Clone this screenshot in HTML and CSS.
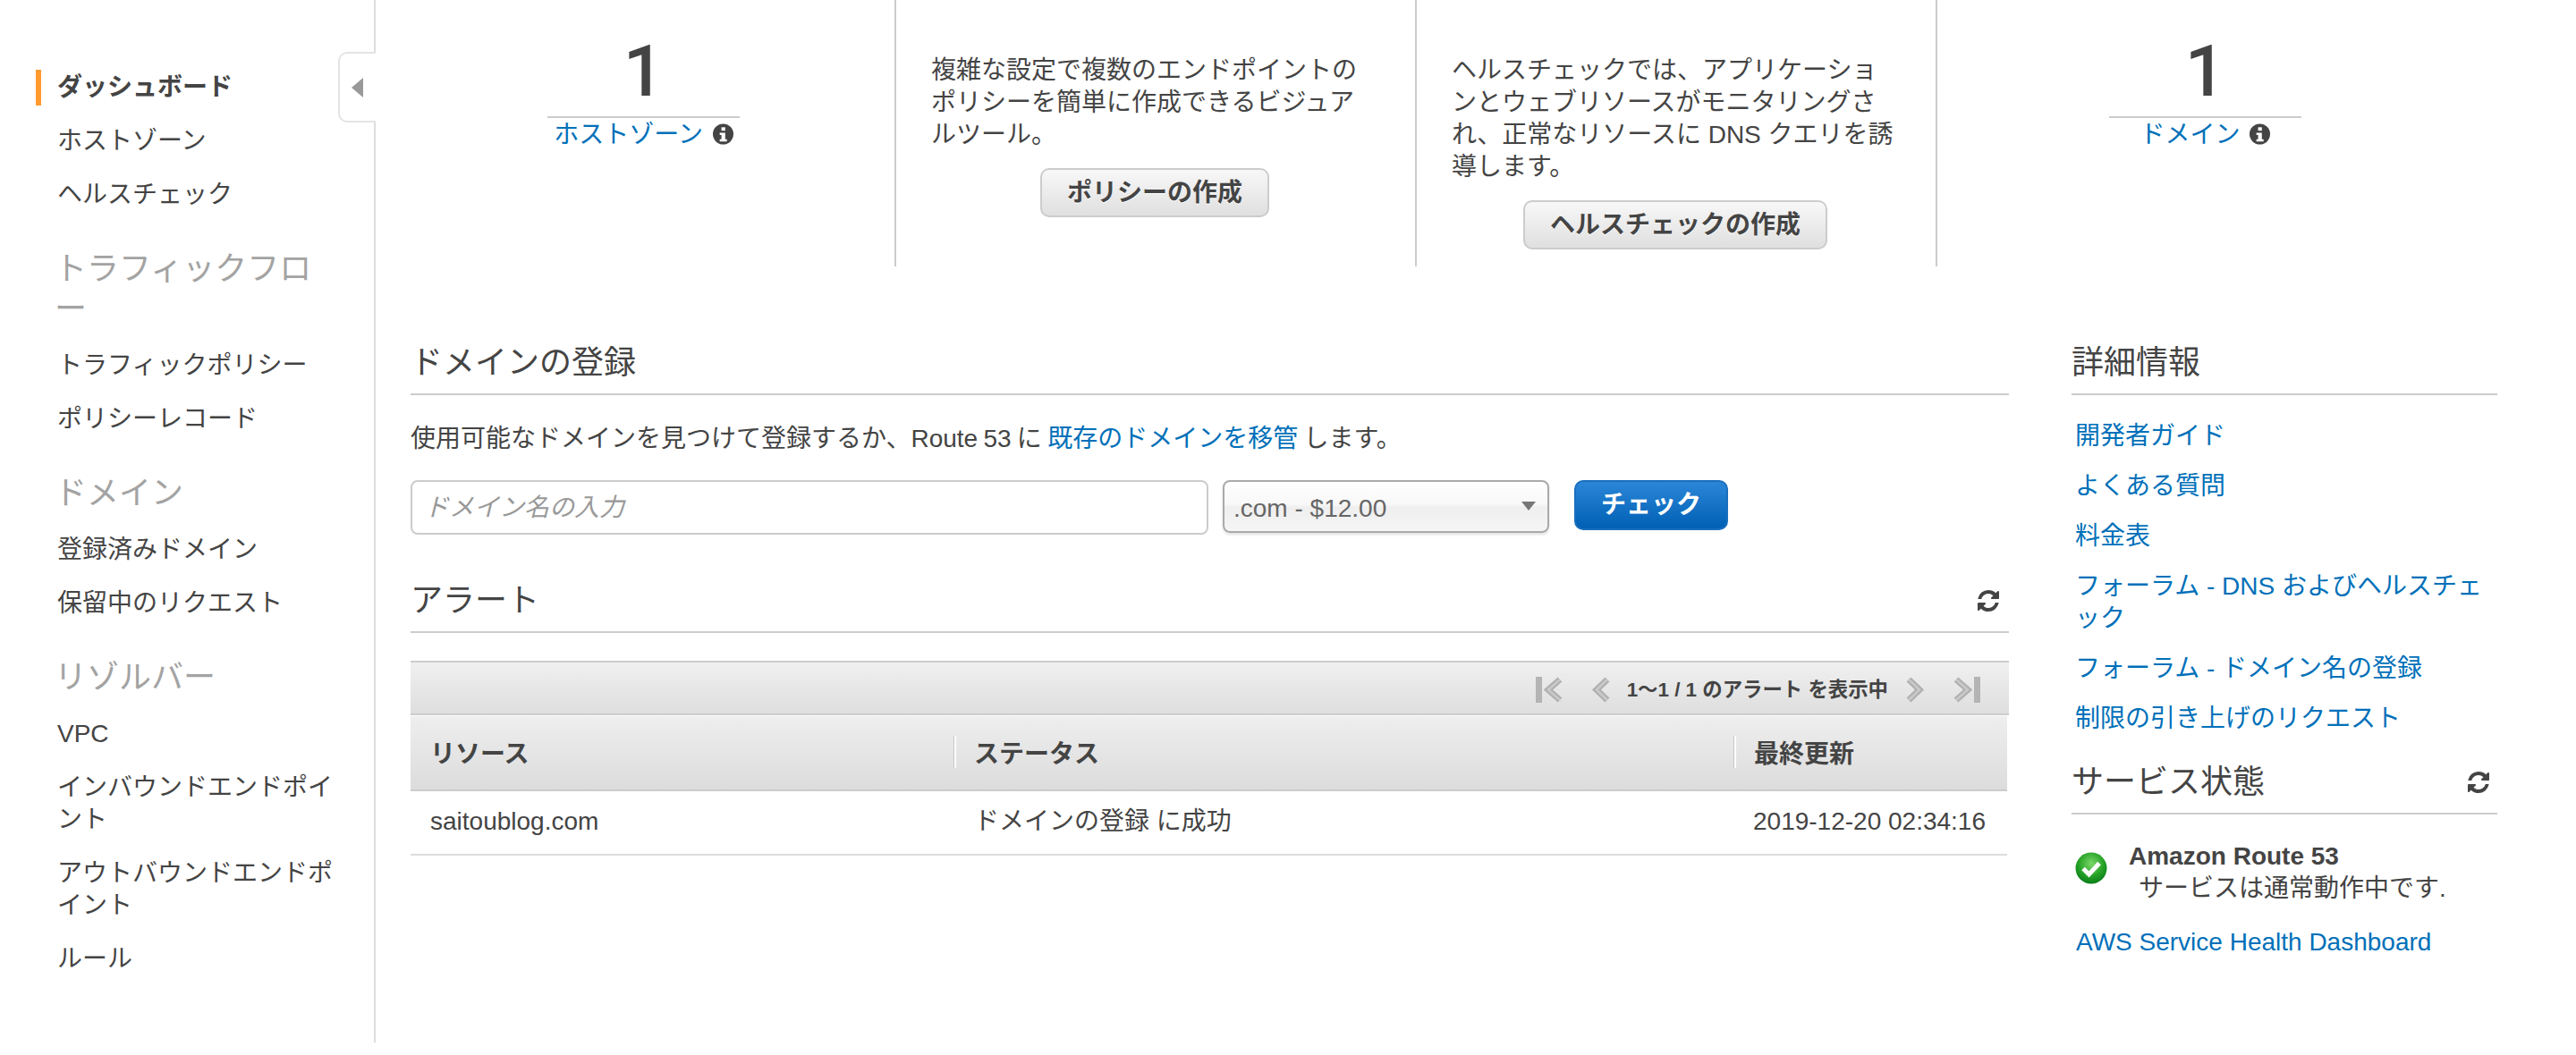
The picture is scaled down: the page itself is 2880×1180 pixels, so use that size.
FILE: index.html
```html
<!DOCTYPE html>
<html lang="ja">
<head>
<meta charset="utf-8">
<title>Route 53 ダッシュボード</title>
<link rel="stylesheet" href="styles.css">
</head>
<body>
<div class="page">
  <aside class="sidebar">
    <button class="collapse" type="button" aria-label="collapse"><span class="collapse-arrow"></span></button>
    <ul class="nav-list">
      <li class="nav-item"><a class="nav-link active" href="#">ダッシュボード</a></li>
      <li class="nav-item"><a class="nav-link" href="#">ホストゾーン</a></li>
      <li class="nav-item"><a class="nav-link" href="#">ヘルスチェック</a></li>
    </ul>
    <h3 class="nav-heading">トラフィックフロー</h3>
    <ul class="nav-list">
      <li class="nav-item"><a class="nav-link" href="#">トラフィックポリシー</a></li>
      <li class="nav-item"><a class="nav-link" href="#">ポリシーレコード</a></li>
    </ul>
    <h3 class="nav-heading">ドメイン</h3>
    <ul class="nav-list">
      <li class="nav-item"><a class="nav-link" href="#">登録済みドメイン</a></li>
      <li class="nav-item"><a class="nav-link" href="#">保留中のリクエスト</a></li>
    </ul>
    <h3 class="nav-heading">リゾルバー</h3>
    <ul class="nav-list">
      <li class="nav-item"><a class="nav-link" href="#">VPC</a></li>
      <li class="nav-item"><a class="nav-link" href="#">インバウンドエンドポイント</a></li>
      <li class="nav-item"><a class="nav-link" href="#">アウトバウンドエンドポイント</a></li>
      <li class="nav-item"><a class="nav-link" href="#">ルール</a></li>
    </ul>
  </aside>

  <main class="main">
    <section class="summary">
      <div class="cell cell-stat">
        <div class="stat">
          <div class="stat-number">1</div>
          <div class="stat-label"><a class="link" href="#">ホストゾーン</a>
            <svg class="info" viewBox="0 0 24 24"><circle cx="12" cy="12" r="12" fill="#444"/><rect x="10" y="4" width="4.4" height="4" fill="#fff"/><path d="M8 10.5h6.4v7.5h2v2.5H8V18h2v-5H8z" fill="#fff"/></svg>
          </div>
        </div>
      </div>
      <div class="cell cell-text">
        <p class="cell-copy">複雑な設定で複数のエンドポイントのポリシーを簡単に作成できるビジュアルツール。</p>
        <button class="btn" type="button">ポリシーの作成</button>
      </div>
      <div class="cell cell-text">
        <p class="cell-copy">ヘルスチェックでは、アプリケーションとウェブリソースがモニタリングされ、正常なリソースに DNS クエリを誘導します。</p>
        <button class="btn" type="button">ヘルスチェックの作成</button>
      </div>
      <div class="cell cell-stat cell-last">
        <div class="stat">
          <div class="stat-number">1</div>
          <div class="stat-label"><a class="link" href="#">ドメイン</a>
            <svg class="info" viewBox="0 0 24 24"><circle cx="12" cy="12" r="12" fill="#444"/><rect x="10" y="4" width="4.4" height="4" fill="#fff"/><path d="M8 10.5h6.4v7.5h2v2.5H8V18h2v-5H8z" fill="#fff"/></svg>
          </div>
        </div>
      </div>
    </section>

    <div class="content">
      <div class="col-left">
        <h2 class="section-title">ドメインの登録</h2>
        <p class="intro">使用可能なドメインを見つけて登録するか、Route 53 に <a class="link" href="#">既存のドメインを移管</a> します。</p>
        <form class="domain-form">
          <input class="domain-input" type="text" placeholder="ドメイン名の入力">
          <div class="select-wrap">
            <select class="tld-select"><option>.com - $12.00</option></select>
          </div>
          <button class="btn btn-primary" type="button">チェック</button>
        </form>

        <h2 class="section-title section-alert">アラート
          <svg class="refresh refresh-alert" viewBox="128 128 1536 1536"><path fill="#444" d="M1639 1056q0 5-1 7-64 268-268 434.5t-478 166.5q-146 0-282.5-55t-243.5-157l-129 129q-19 19-45 19t-45-19-19-45v-448q0-26 19-45t45-19h448q26 0 45 19t19 45-19 45l-137 137q71 66 161 102t187 36q134 0 250-65t186-179q11-17 53-117 8-23 30-23h192q13 0 22.5 9.5t9.5 22.5zm25-800v448q0 26-19 45t-45 19h-448q-26 0-45-19t-19-45 19-45l138-138q-148-137-349-137-134 0-250 65t-186 179q-11 17-53 117-8 23-30 23h-199q-13 0-22.5-9.5t-9.5-22.5v-7q65-268 270-434.5t480-166.5q146 0 284 55.5t245 156.5l130-129q19-19 45-19t45 19 19 45z"/></svg>
        </h2>

        <div class="pager">
          <svg class="pg-icon pg-wide" viewBox="0 0 31 29"><rect x="0" y="0" width="7" height="29" fill="#b4b4b4"/><path d="M27 3 14 14.5 27 26" fill="none" stroke="#b0b0b0" stroke-width="7"/><path d="M27 3 14 14.5 27 26" fill="none" stroke="#c9c9c9" stroke-width="2.5"/></svg>
          <svg class="pg-icon pg-narrow" viewBox="0 0 21 29"><path d="M18 3 6 14.5 18 26" fill="none" stroke="#b0b0b0" stroke-width="7"/><path d="M18 3 6 14.5 18 26" fill="none" stroke="#c9c9c9" stroke-width="2.5"/></svg>
          <span class="pager-text">1〜1 / 1 のアラート を表示中</span>
          <svg class="pg-icon pg-narrow" viewBox="0 0 21 29"><path d="M3 3 15 14.5 3 26" fill="none" stroke="#b0b0b0" stroke-width="7"/><path d="M3 3 15 14.5 3 26" fill="none" stroke="#c9c9c9" stroke-width="2.5"/></svg>
          <svg class="pg-icon pg-wide pg-last" viewBox="0 0 31 29"><path d="M4 3 17 14.5 4 26" fill="none" stroke="#b0b0b0" stroke-width="7"/><path d="M4 3 17 14.5 4 26" fill="none" stroke="#c9c9c9" stroke-width="2.5"/><rect x="24" y="0" width="7" height="29" fill="#b4b4b4"/></svg>
        </div>

        <table class="alerts">
          <thead>
            <tr><th class="col-a">リソース</th><th class="col-b">ステータス</th><th class="col-c">最終更新</th></tr>
          </thead>
          <tbody>
            <tr><td>saitoublog.com</td><td>ドメインの登録 に成功</td><td class="cell-date">2019-12-20 02:34:16</td></tr>
          </tbody>
        </table>
      </div>

      <div class="col-right">
        <h2 class="section-title">詳細情報</h2>
        <ul class="side-links">
          <li><a class="link" href="#">開発者ガイド</a></li>
          <li><a class="link" href="#">よくある質問</a></li>
          <li><a class="link" href="#">料金表</a></li>
          <li><a class="link" href="#">フォーラム - DNS およびヘルスチェック</a></li>
          <li><a class="link" href="#">フォーラム - ドメイン名の登録</a></li>
          <li><a class="link" href="#">制限の引き上げのリクエスト</a></li>
        </ul>
        <h2 class="section-title section-status">サービス状態
          <svg class="refresh refresh-status" viewBox="128 128 1536 1536"><path fill="#444" d="M1639 1056q0 5-1 7-64 268-268 434.5t-478 166.5q-146 0-282.5-55t-243.5-157l-129 129q-19 19-45 19t-45-19-19-45v-448q0-26 19-45t45-19h448q26 0 45 19t19 45-19 45l-137 137q71 66 161 102t187 36q134 0 250-65t186-179q11-17 53-117 8-23 30-23h192q13 0 22.5 9.5t9.5 22.5zm25-800v448q0 26-19 45t-45 19h-448q-26 0-45-19t-19-45 19-45l138-138q-148-137-349-137-134 0-250 65t-186 179q-11 17-53 117-8 23-30 23h-199q-13 0-22.5-9.5t-9.5-22.5v-7q65-268 270-434.5t480-166.5q146 0 284 55.5t245 156.5l130-129q19-19 45-19t45 19 19 45z"/></svg>
        </h2>
        <div class="status">
          <svg class="status-icon" viewBox="0 0 36 36">
            <defs><radialGradient id="ok" cx="50%" cy="35%" r="65%"><stop offset="0" stop-color="#7bd86a"/><stop offset="0.6" stop-color="#27a327"/><stop offset="1" stop-color="#0b7d1a"/></radialGradient></defs>
            <circle cx="18" cy="18" r="17.5" fill="url(#ok)"/>
            <path d="M9 18.5 15.5 25 27 12.5" fill="none" stroke="#fff" stroke-width="5"/>
          </svg>
          <div class="status-text">
            <div class="status-name">Amazon Route 53</div>
            <div class="status-msg">サービスは通常動作中です.</div>
          </div>
        </div>
        <a class="link dashboard-link" href="#">AWS Service Health Dashboard</a>
      </div>
    </div>
  </main>
</div>
</body>
</html>
```

FILE: styles.css
```css
* { box-sizing: border-box; }
html, body { margin: 0; padding: 0; background: #fff; }
body {
  font-family: "Liberation Sans", "Noto Sans CJK JP", sans-serif;
  font-size: 28px;
  line-height: 36px;
  color: #444;
}
ul { list-style: none; margin: 0; padding: 0; }
a { text-decoration: none; }
.link { color: #0070b9; }

.page { display: flex; align-items: flex-start; }

/* Sidebar */
.sidebar {
  position: relative;
  flex: 0 0 420px;
  height: 1166px;
  padding: 68px 0 0 0;
  border-right: 2px solid #ddd;
}
.collapse {
  position: absolute;
  top: 58px;
  right: -2px;
  width: 42px;
  height: 79px;
  padding: 0;
  display: flex;
  align-items: center;
  justify-content: center;
  background: #fff;
  border: 2px solid #e4e4e4;
  border-right: 0;
  border-radius: 10px 0 0 10px;
}
.collapse-arrow {
  width: 0;
  height: 0;
  margin-right: 2px;
  border-top: 11px solid transparent;
  border-bottom: 11px solid transparent;
  border-right: 13px solid #999;
}
.nav-item { padding: 10px 45px 10px 40px; }
.nav-link {
  display: block;
  padding: 2px 0 2px 18px;
  border-left: 6px solid transparent;
  color: #444;
}
.nav-link.active {
  border-left-color: #ff9a2e;
  font-weight: 700;
}
.nav-heading {
  margin: 30px 60px 11px 61px;
  font-size: 36px;
  line-height: 45px;
  font-weight: 400;
  color: #a3a3a3;
}

/* Main */
.main { flex: 1 1 auto; min-width: 0; }
.summary { display: grid; grid-template-columns: repeat(4, 582px); height: 298px; }
.cell { border-right: 2px solid #ccc; }
.cell-last { border-right: 0; }
.cell-stat { padding: 34px 0 0 192px; }
.stat { width: 215px; }
.stat-number {
  font-family: Roboto, "Liberation Sans", sans-serif;
  font-size: 80px;
  font-weight: 500;
  line-height: 92px;
  padding-bottom: 4px;
  border-bottom: 2px solid #ccc;
  text-align: center;
}
.stat-label { margin-top: 1px; text-align: center; white-space: nowrap; }
.info { width: 23px; height: 24px; margin-left: 3px; vertical-align: -2px; }
.cell-text { display: flex; flex-direction: column; align-items: center; padding: 61px 41px 0 39px; }
.cell-copy { margin: 0 0 19px; width: 100%; }

.btn {
  height: 55px;
  padding: 0 27.5px;
  border: 2px solid #ccc;
  border-radius: 10px;
  background: linear-gradient(#f8f8f8, #dfdfdf);
  font: 700 28px/36px "Liberation Sans", "Noto Sans CJK JP", sans-serif;
  color: #444;
  text-shadow: 0 1px 0 #fff;
}
.btn-primary {
  height: 56px;
  padding: 0 28px;
  border-color: #1a6fbe;
  background: linear-gradient(#2b86d8, #0060b4);
  color: #fff;
  text-shadow: none;
}

.content { display: flex; align-items: flex-start; gap: 70px; padding: 83px 0 0 39px; }
.col-left { flex: 0 0 1787px; }
.col-right { flex: 0 0 476px; }

.section-title {
  display: flex;
  align-items: center;
  justify-content: space-between;
  margin: 0;
  padding: 2px 0 11px;
  border-bottom: 2px solid #ccc;
  font-size: 36px;
  line-height: 46px;
  font-weight: 400;
}
.intro { margin: 31px 0 28px; word-spacing: -1.5px; }
.domain-form { display: flex; align-items: flex-start; }
.domain-input {
  width: 892px;
  height: 61px;
  padding: 0 13px;
  border: 2px solid #ccc;
  border-radius: 8px;
  font: 28px "Liberation Sans", "Noto Sans CJK JP", sans-serif;
  color: #444;
  background: #fff;
}
.domain-input::placeholder { color: #999; font-style: italic; opacity: 1; }
.select-wrap { position: relative; margin: 0 28px 0 16px; }
.select-wrap::after {
  content: "";
  position: absolute;
  top: 24px;
  right: 15px;
  border-left: 8px solid transparent;
  border-right: 8px solid transparent;
  border-top: 10px solid #777;
}
.tld-select {
  display: block;
  width: 365px;
  height: 59px;
  padding: 4px 0 0 10px;
  appearance: none;
  border: 2px solid #aaa;
  border-radius: 8px;
  background: linear-gradient(#fff 0, #f8f8f8 45%, #efefef 52%, #f5f5f5 100%);
  box-shadow: 0 2px 3px rgba(0, 0, 0, .12);
  font: 28px "Liberation Sans", sans-serif;
  color: #666;
}

.section-alert { margin-top: 49px; }
.refresh { width: 24px; height: 24px; }
.refresh-alert { margin-right: 11px; }
.refresh-status { margin-right: 9px; }

.pager {
  display: flex;
  align-items: center;
  justify-content: flex-end;
  height: 61px;
  margin-top: 31px;
  padding: 4px 32px 0 0;
  border-top: 2px solid #ccc;
  border-bottom: 2px solid #ccc;
  background: linear-gradient(#f0f0f0, #dedede);
}
.pg-icon { height: 29px; flex: none; }
.pg-wide { width: 31px; margin-right: 31px; }
.pg-narrow { width: 21px; }
.pg-last { margin: 0 0 0 31px; }
.pager-text { margin: 0 20px 0 19px; font-size: 22.4px; font-weight: 700; }

.alerts { width: 1785px; margin-top: 1px; border-collapse: collapse; table-layout: fixed; }
.col-a { width: 608px; }
.col-b { width: 872px; }
.col-c { width: 305px; }
.alerts th {
  position: relative;
  height: 83px;
  padding: 3px 0 0 22px;
  border-bottom: 2px solid #ccc;
  background: linear-gradient(#eee, #dcdcdc);
  font-weight: 700;
  text-align: left;
}
.alerts th + th::before {
  content: "";
  position: absolute;
  left: 0;
  top: 22px;
  height: 36px;
  width: 2px;
  background: #fff;
  box-shadow: -1px 0 0 #c8c8c8;
}
.alerts td {
  height: 72px;
  padding: 0 0 2px 22px;
  border-bottom: 2px solid #ddd;
}
.alerts td.cell-date { padding-left: 21px; }

.side-links { margin-top: 28px; padding-left: 4px; }
.side-links li { margin-bottom: 20px; }
.section-status { margin-top: 28px; }
.status { display: flex; align-items: flex-start; margin-top: 28px; padding-left: 4px; }
.status-icon { width: 36px; height: 36px; margin: 14px 24px 0 0; flex: none; }
.status-text { line-height: 35px; }
.status-name { font-weight: 700; line-height: 37px; }
.status-msg { padding-left: 11px; }
.dashboard-link { display: block; margin-top: 25px; padding-left: 5px; }
```
